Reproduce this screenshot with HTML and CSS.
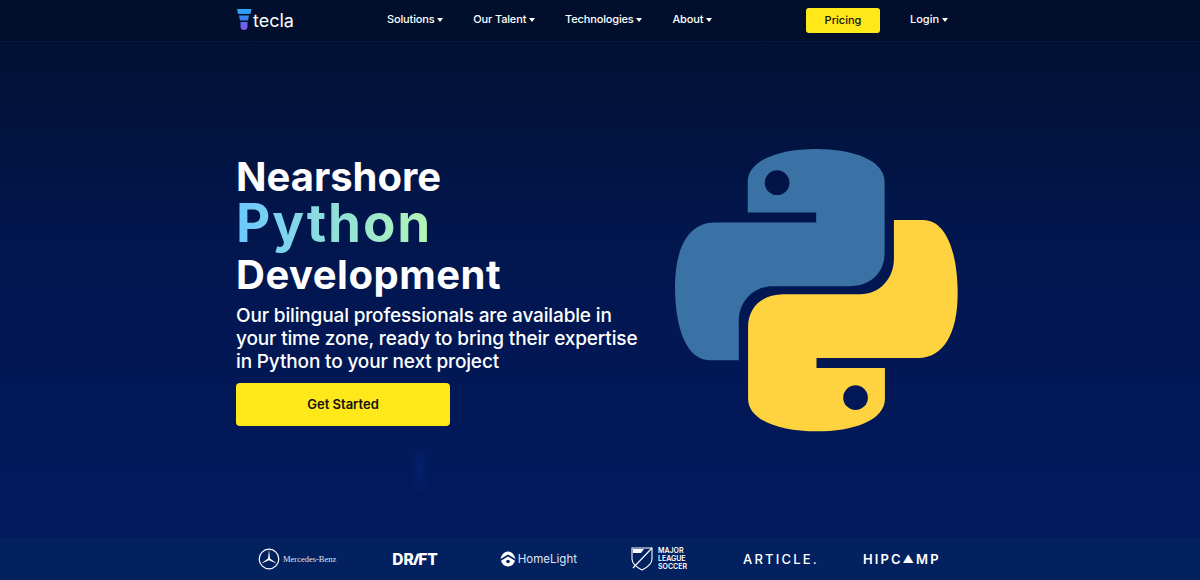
FILE: index.html
```html
<!DOCTYPE html>
<html lang="en">
<head>
  <meta charset="UTF-8" />
  <title>Nearshore Python Development</title>
  <link rel="stylesheet" href="styles.css">
</head>
<body>

  <header class="topbar">
    <div class="topbar-inner">
      <a href="#" class="brand">
        <svg class="brand-icon" viewBox="0 0 16 22" width="16" height="22">
          <defs>
            <linearGradient id="funnel" x1="0" y1="0" x2="0" y2="1">
              <stop offset="0" stop-color="#2aa8f5"/>
              <stop offset="0.5" stop-color="#3f7cf0"/>
              <stop offset="1" stop-color="#8a4fe8"/>
            </linearGradient>
          </defs>
          <path fill="url(#funnel)" d="M1 0H15.5L14.5 5H2ZM3 6.500H13L12 11.500H4ZM4.500 13H11.500V17.500A3.500 3.500 0 0 1 4.500 17.500Z"/>
        </svg>
        <span class="brand-name">tecla</span>
      </a>
      <nav class="menu">
        <a href="#">Solutions <i class="caret"></i></a>
        <a href="#">Our Talent <i class="caret"></i></a>
        <a href="#">Technologies <i class="caret"></i></a>
        <a href="#">About <i class="caret"></i></a>
      </nav>
      <a href="#" class="btn-pricing">Pricing</a>
      <a href="#" class="login">Login <i class="caret"></i></a>
    </div>
  </header>

  <main class="hero">
    <div class="hero-text">
      <h1>
        <span class="line line-first">Nearshore</span>
        <span class="line line-python">Python</span>
        <span class="line line-last">Development</span>
      </h1>
      <p>Our bilingual professionals are available in your time zone, ready to bring their expertise in Python to your next project</p>
      <a href="#" class="btn-start">Get Started</a>
    </div>
    <svg class="python-logo" viewBox="47 27 848 848" width="283" height="283">
      <path fill="#3a72a6" fill-rule="evenodd" d="M470 27C580 27 675 60 675 125V340C675 400 630 438 570 438H340C280 438 238 485 238 545V660H150C85 660 47 570 47 440C47 320 90 247 165 247H470V217H265V125C265 60 360 27 470 27ZM353 91A37 37 0 1 0 353 165A37 37 0 1 0 353 91Z"/>
      <path fill="#ffd23f" fill-rule="evenodd" transform="rotate(180 470.500 450)" d="M470 27C580 27 675 60 675 125V340C675 400 630 438 570 438H340C280 438 238 485 238 545V660H150C85 660 47 570 47 440C47 320 90 247 165 247H470V217H265V125C265 60 360 27 470 27ZM353 91A37 37 0 1 0 353 165A37 37 0 1 0 353 91Z"/>
    </svg>
  </main>

  <footer class="clients">
    <div class="client mercedes">
      <svg viewBox="0 0 22 22" width="22" height="22">
        <circle cx="11" cy="11" r="9.800" fill="none" stroke="#fff" stroke-width="1.200"/>
        <path fill="#fff" d="M11 1.500L12 10.400L19.200 15.800L11 12.300L2.800 15.800L10 10.400Z"/>
      </svg>
      <span>Mercedes-Benz</span>
    </div>
    <div class="client drift">DR<span class="slash">I</span>FT</div>
    <div class="client homelight">
      <svg viewBox="0 0 16 16" width="16" height="16">
        <path fill="#fff" d="M8 0.500C11.500 0.500 14.500 3.500 15.500 8L8 3.500L0.500 8C1.500 3.500 4.500 0.500 8 0.500ZM8 5.500L15 9.800C14 13.300 11.300 15.500 8 15.500C4.700 15.500 2 13.300 1 9.800Z"/>
        <circle cx="8" cy="10.500" r="1.800" fill="#04215f"/>
      </svg>
      <span>HomeLight</span>
    </div>
    <div class="client mls">
      <svg viewBox="0 0 22 24" width="22" height="24">
        <path fill="none" stroke="#fff" stroke-width="1.100" d="M1 1H21V12C21 18 15 21 11 23C7 21 1 18 1 12Z"/>
        <path fill="none" stroke="#fff" stroke-width="1.100" d="M21 1L2 21"/>
        <path fill="#fff" d="M2 2H13L10 6H2Z"/>
      </svg>
      <span>MAJOR<br>LEAGUE<br>SOCCER</span>
    </div>
    <div class="client article">ARTICLE.</div>
    <div class="client hipcamp">HIPC<span class="tent">▲</span>MP</div>
  </footer>

</body>
</html>
```

FILE: styles.css
```css
* {
  box-sizing: border-box;
}
body {
  margin: 0;
  height: 580px;
  overflow: hidden;
  display: flex;
  flex-direction: column;
  font-family: Inter, "Open Sans", sans-serif;
  color: #fff;
  background:
    radial-gradient(ellipse 10px 28px at 420px 470px, rgba(12, 52, 150, 0.3), transparent),
    linear-gradient(to bottom, #010f2c 0%, #02164e 40%, #021a60 100%);
}
a {
  color: inherit;
  text-decoration: none;
}

/* barra superior */
.topbar {
  height: 42px;
  flex: none;
  background: #010f2c;
  border-bottom: 1px solid #03183f;
}
.topbar-inner {
  display: flex;
  align-items: center;
  height: 41px;
  padding-left: 236px;
  font-size: 11px;
  font-weight: 500;
}
.brand {
  display: flex;
  align-items: center;
  gap: 1px;
  width: 151px;
  padding-bottom: 1px;
}
.brand-name {
  font-size: 18px;
  font-weight: 400;
}
.menu {
  display: flex;
  gap: 30px;
  width: 419px;
  padding-bottom: 3px;
  letter-spacing: -0.150px;
}
.caret {
  display: inline-block;
  width: 0;
  height: 0;
  vertical-align: 1px;
  border-left: 3px solid transparent;
  border-right: 3px solid transparent;
  border-top: 4px solid #fff;
}
.btn-pricing {
  width: 74px;
  height: 25px;
  line-height: 25px;
  text-align: center;
  background: #ffe81a;
  color: #111;
  border-radius: 3px;
}
.login {
  margin-left: 30px;
  padding-bottom: 3px;
}

/* hero */
.hero {
  flex: 1;
  display: flex;
  align-items: center;
  justify-content: space-between;
  padding: 0 242px 0 236px;
}
.hero-text {
  width: 410px;
}
h1 {
  margin: 0;
  font-weight: 700;
  font-size: 40px;
}
.line {
  display: block;
}
.line-first {
  line-height: 45px;
}
/* el padding deja sitio a la "y" dentro del gradiente */
.line-python {
  font-size: 53px;
  line-height: 49px;
  letter-spacing: 1.800px;
  width: max-content;
  padding-bottom: 12px;
  margin-bottom: -12px;
  background: linear-gradient(to right, #6cc8ff, #b4f7b4);
  -webkit-background-clip: text;
  background-clip: text;
  color: transparent;
}
.line-last {
  line-height: 53px;
  letter-spacing: 0.500px;
}
.hero-text p {
  margin: 3px 0 10px;
  font-size: 19px;
  font-weight: 500;
  line-height: 23px;
  letter-spacing: -0.150px;
}
.btn-start {
  display: block;
  width: 214px;
  height: 43px;
  line-height: 43px;
  text-align: center;
  background: #ffe81a;
  color: #111;
  font-size: 13px;
  font-weight: 600;
  border-radius: 4px;
}
.python-logo {
  flex: none;
}

/* logos de clientes */
.clients {
  height: 42px;
  flex: none;
  display: flex;
  align-items: center;
  padding-left: 258px;
  background: #04215f;
}
.client {
  display: flex;
  align-items: center;
}
.mercedes {
  gap: 3px;
  font-family: "Liberation Serif", serif;
  font-size: 8.500px;
  color: #dfe5f0;
}
.drift {
  margin-left: 56px;
  font-size: 15.500px;
  font-weight: 800;
}
.slash {
  display: inline-block;
  transform: skewX(-20deg);
}
.homelight {
  margin-left: 62px;
  gap: 2px;
  font-size: 11.500px;
  color: #dfe5f0;
}
.mls {
  margin-left: 54px;
  gap: 5px;
  font-size: 7px;
  font-weight: 600;
  line-height: 8px;
}
.article {
  margin-left: 56px;
  font-size: 13px;
  font-weight: 500;
  letter-spacing: 2.200px;
}
.hipcamp {
  margin-left: 44px;
  font-size: 13px;
  font-weight: 600;
  letter-spacing: 2.100px;
}
.tent {
  font-size: 11px;
}
```
